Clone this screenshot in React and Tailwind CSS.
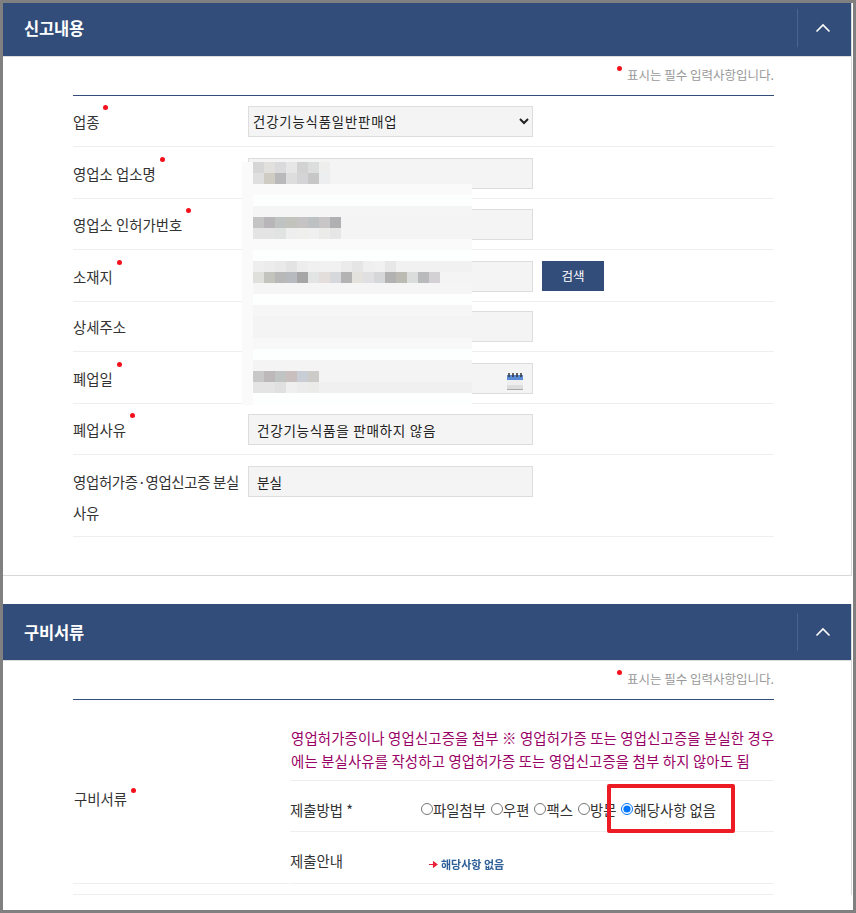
const Dot = ({ className = "" }) => (
  <span className={`absolute h-[5px] w-[5px] rounded-full bg-[#f5101c] ${className}`} />
);

const Label = ({ children, dot = true }) => (
  <span className="relative">
    {children}
    {dot && <Dot className="-right-[9px] -top-[6px]" />}
  </span>
);

const Chevron = () => (
  <svg width="16" height="10" viewBox="0 0 16 10" fill="none" className="block">
    <path d="M1.5 8.5 8 2l6.500 6.500" stroke="#fff" strokeWidth="1.600" />
  </svg>
);

const Header = ({ title, className }) => (
  <div className={`flex w-[848px] items-center justify-between border-b border-[#ddd] bg-[#334d7a] pl-[21px] ${className}`}>
    <h2 className="text-[16.500px] font-bold leading-none tracking-[-0.2px] text-white">{title}</h2>
    <div className="flex h-[38px] w-[54px] items-center justify-center border-l border-[#4a6390] pr-[4px]">
      <Chevron />
    </div>
  </div>
);

const Note = () => (
  <div className="flex h-[39px] items-start justify-end border-b border-[#334d7a] pt-[10px] text-[12.500px] leading-[16px] text-[#999]">
    <span className="relative">
      <Dot className="-left-[10px] -top-[1px]" />
      표시는 필수 입력사항입니다.
    </span>
  </div>
);

const TextBox = ({ value = "", spaced = false, children }) => (
  <div className="relative h-[31px] w-[285px]">
    <input
      readOnly
      value={value}
      className={`h-full w-full border border-[#ddd] bg-[#f4f4f4] px-2 text-[13.600px] text-[#222] outline-none ${spaced ? "tracking-[0.7px]" : ""}`}
    />
    {children}
  </div>
);

const CalendarIcon = () => (
  <svg width="18" height="19" viewBox="0 0 18 19" className="absolute right-[9px] top-[9px]">
    <rect x="1" y="3" width="16" height="5" fill="#5a8ad6" />
    <rect x="1" y="8" width="16" height="10" fill="#eeeeee" />
    <rect x="1" y="13" width="16" height="4" fill="#dddddd" />
    <rect x="1" y="17" width="16" height="1" fill="#a8a8a8" />
    <path d="M3 1v4M7 1v4M11 1v4M15 1v4" stroke="#333" strokeWidth="1.500" />
  </svg>
);

const rows = [
  { label: "업종", row: "h-[51px] pt-[10px]", control: (
    <select className="h-[31px] w-[285px] border border-[#ddd] bg-[#f4f4f4] text-[13.300px] tracking-[0.9px] text-[#222] outline-none">
      <option>건강기능식품일반판매업</option>
    </select>
  ) },
  { label: "영업소 업소명", row: "h-[52px] pt-[11px]", control: <TextBox /> },
  { label: "영업소 인허가번호", row: "h-[51px] pt-[10px]", control: <TextBox /> },
  { label: "소재지", row: "h-[52px] pt-[11px]", control: (
    <div className="flex gap-[9px]">
      <TextBox />
      <button className="h-[30px] w-[62px] bg-[#334d7a] text-[12.500px] text-white">검색</button>
    </div>
  ) },
  { label: "상세주소", dot: false, row: "h-[50px] pt-[9px]", control: <TextBox /> },
  { label: "폐업일", row: "h-[52px] pt-[11px]", control: <TextBox><CalendarIcon /></TextBox> },
  { label: "폐업사유", row: "h-[51px] pt-[10px]", control: <TextBox spaced value="건강기능식품을 판매하지 않음" /> },
  { label: "영업허가증·영업신고증 분실 사유", tight: true, dot: false, row: "h-[82px] pt-[11px]", control: <TextBox value="분실" /> },
];

const F3 = "#f4f4f4";
const mosaic = [
  [162, ["#d6d6d6", "#e2e0dc", "#dadadc", "#e6e6e6", "#d2d2d2", "#dcdddd", "#eeeeec"], F3],
  [173, ["#dfdfdf", "#cfccc4", "#b9b9bb", "#dddddd", "#d4d3d5", "#c8c7c8", "#eceef0"], F3],
  [184, [], "#fafafa"],
  [195, [], "#fdfefe"],
  [206, [], "#f5f5f5"],
  [217, ["#c4c4c4", "#b8b6b8", "#bfc3c2", "#c2c3bd", "#c6c3c4", "#bec1c1", "#c9c6c8", "#b0b0b2"], F3],
  [228, ["#e4e4e4", "#e4e4e4", "#e1e3e2", "#eeeeee", "#efefee", "#f0f0f0", "#ebebe9", "#e6e6e6"], F3],
  [239, [], "#fafafa"],
  [250, [], "#fdfefe"],
  [261, ["#eeeeee", "#ececec", "#e9e9e9", "#e3e3e3", "#ededed", "#f0f0f0", "#f1f1f1", "#f1f1f1", "#ebebeb", "#e5e5e5", "#efefef", "#f1f1f1", "#e7e7e7"], "#f1f1f1"],
  [272, ["#dfdfdc", "#c3c4bd", "#b8b8b8", "#b7bbbf", "#a6a6a6", "#e3e5e4", "#e3dddb", "#d7d8dc", "#b3b3b3", "#e3e2dd", "#e0e0e2", "#d6d7d9", "#b2b2b2", "#bcbbb3", "#dadddc", "#b9babc", "#d3d1d3"], F3],
  [283, [], "#f5f5f5"],
  [294, [], "#fdfefe"],
  [305, [], "#f6f6f6"],
  [316, [], F3],
  [327, [], F3],
  [338, [], "#f8f8f8"],
  [349, [], "#fdfefe"],
  [360, [], F3],
  [371, ["#c8c8c8", "#bdb9ba", "#c0c5c3", "#c9bfbf", "#c9cdd6", "#cccbc8"], F3],
  [382, ["#e4e4e4", "#e4e4e4", "#e0e0e0", "#efefef", "#ececec", "#ebebe9"], "#f0f0f0"],
  [393, [], "#fdfefe"],
];

const Mosaic = () => (
  <svg width="230" height="243" viewBox="242 162 230 243" className="absolute left-[239px] top-[159px]" shapeRendering="crispEdges">
    {mosaic.map(([y, cells, base]) => (
      <g key={y}>
        <rect x="242" y={y} width="230" height={y === 393 ? 12 : 11} fill={base} />
        <rect x="242" y={y} width="11" height={y === 393 ? 12 : 11} fill="#fafafa" />
        {cells.map((c, i) => (
          <rect key={i} x={253 + i * 11} y={y} width="11" height="11" fill={c} />
        ))}
      </g>
    ))}
  </svg>
);

const Radio = ({ label, checked }) => (
  <label className="mr-[5px] inline-flex items-center">
    <input type="radio" name="method" defaultChecked={checked} className="m-0 h-[12px] w-[12px]" />
    <span>{label}</span>
  </label>
);

export default function App() {
  return (
    <div className="relative h-[913px] w-[856px] overflow-hidden border-[3px] border-[#808080] bg-white font-['Noto_Sans_CJK_KR','Noto_Sans',sans-serif] text-[14.400px] text-[#333]">
      <section className="h-[573px] w-[849px] border-r border-b border-[#d8d8d8]">
        <Header title="신고내용" className="h-[54px] pb-[3px]" />
        <div className="ml-[70px] w-[701px]">
          <Note />
          {rows.map((r) => (
            <div key={r.label} className={`flex border-b border-[#eee] ${r.row}`}>
              <div className={`w-[175px] leading-[31px] ${r.tight ? "tracking-[-0.3px]" : ""}`}>
                <Label dot={r.dot !== false}>{r.label}</Label>
              </div>
              {r.control}
            </div>
          ))}
        </div>
      </section>

      <section className="mt-[28px] w-[849px] border-r border-[#d8d8d8]">
        <Header title="구비서류" className="h-[57px]" />
        <div className="ml-[70px] w-[701px]">
          <Note />
          <div className="flex gap-[1px]">
            <div className="flex h-[184px] w-[216px] items-start border-b border-[#eee] pl-[1px] pt-[83px] leading-[31px]">
              <span className="relative inline-block">
                구비서류
                <Dot className="-right-[9px] top-[5px]" />
              </span>
            </div>
            <div className="w-[484px]">
              <div className="h-[81px] whitespace-nowrap border-b border-[#eee] pl-[1px] pt-[26px] leading-[23px] tracking-[0.15px] text-[#990066]">
                영업허가증이나 영업신고증을 첨부 ※ 영업허가증 또는 영업신고증을 분실한 경우
                <br />
                에는 분실사유를 작성하고 영업허가증 또는 영업신고증을 첨부 하지 않아도 됨
              </div>
              <div className="flex h-[51px] items-center border-b border-[#eee] pt-[7px]">
                <div className="w-[131px]">제출방법 *</div>
                <div className="flex">
                  <Radio label="파일첨부" />
                  <Radio label="우편" />
                  <Radio label="팩스" />
                  <Radio label="방문" />
                  <Radio label="해당사항 없음" checked />
                </div>
              </div>
              <div className="flex h-[52px] items-center border-b border-[#eee] pt-[7px]">
                <div className="w-[139px]">제출안내</div>
                <div className="flex items-center gap-[3px] pt-[6px] text-[11px] font-bold text-[#2f6099] blur-[0.4px]">
                  <svg width="9" height="7" viewBox="0 0 9 7">
                    <path d="M0 3.500h5M4.500 1l3.500 2.500L4.500 6z" stroke="#e8203a" strokeWidth="1.200" fill="#e8203a" />
                  </svg>
                  해당사항 없음
                </div>
              </div>
            </div>
          </div>
          <div className="mt-[10px] h-[1px] bg-[#eee]" />
        </div>
      </section>

      <Mosaic />
      <div className="absolute left-[604px] top-[781px] h-[49px] w-[128px] rounded-[2px] border-[4px] border-[#ed1c24]" />
    </div>
  );
}
